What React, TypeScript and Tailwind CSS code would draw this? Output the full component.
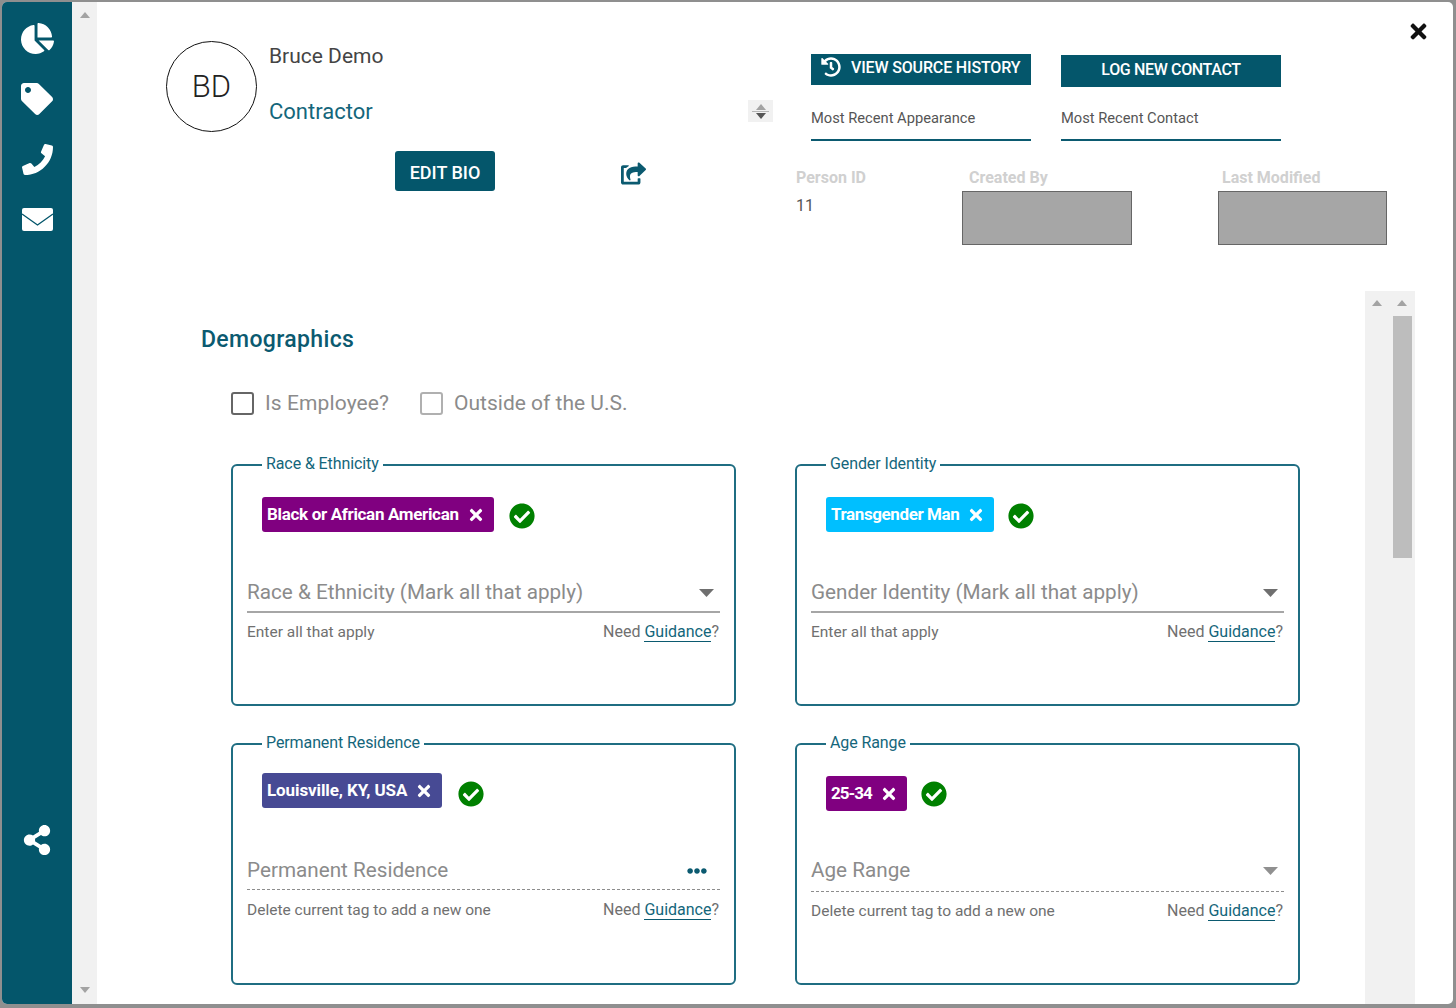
import React from "react";
import {
  FaChartPie,
  FaTag,
  FaPhone,
  FaShareAlt,
  FaHistory,
  FaShareSquare,
  FaTimes,
  FaCheckCircle,
  FaEllipsisH,
} from "react-icons/fa";

function Up({ className }: { className?: string }) {
  return (
    <svg width="10" height="6" viewBox="0 0 10 6" className={className}>
      <polygon points="5,0 10,6 0,6" fill="currentColor" />
    </svg>
  );
}
function Down({ className }: { className?: string }) {
  return (
    <svg width="10" height="6" viewBox="0 0 10 6" className={className}>
      <polygon points="0,0 10,0 5,6" fill="currentColor" />
    </svg>
  );
}

function Box({
  legend,
  chip,
  chipClass,
  chipTop,
  placeholder,
  help,
  inputClass,
  helpTop,
  ellipsis,
  faded,
  gap,
}: {
  legend: string;
  chip: string;
  chipClass: string;
  chipTop: string;
  placeholder: string;
  help: string;
  inputClass: string;
  helpTop: string;
  ellipsis?: boolean;
  faded?: boolean;
  gap: string;
}) {
  return (
    <fieldset className="h-[250px] min-w-0 rounded-md border-2 border-[#1f6d82] px-[14px]">
      <legend className="ml-[15px] px-1 pb-[2px] text-[16px] leading-[16px] tracking-[-0.1px] text-[#14667b]">{legend}</legend>
      <div className={`ml-[15px] flex items-center ${chipTop}`}>
        <span className={`flex h-[35px] items-center rounded-[3px] pl-[5px] pr-[9px] pt-[2px] text-[17px] font-bold text-white ${chipClass}`}>
          {chip}
          <FaTimes className="mb-[1px] ml-[8px] text-[18px]" />
        </span>
        <FaCheckCircle className={`${gap} text-[26px] text-[#008000]`} />
      </div>
      <div className={`flex items-center justify-between pr-[6px] text-[20.7px] text-[#8b8b8b] ${inputClass}`}>
        <span>{placeholder}</span>
        {ellipsis ? (
          <FaEllipsisH className="mr-[7px] text-[20px] text-[#0b5a70]" />
        ) : (
          <svg width="15" height="8" viewBox="0 0 15 8" className={faded ? "text-[#909090]" : "text-[#6f6f6f]"}>
            <polygon points="0,0 15,0 7.5,8" fill="currentColor" />
          </svg>
        )}
      </div>
      <div className={`flex items-center justify-between leading-[18px] text-[#707070] ${helpTop}`}>
        <span className="text-[15.5px]">{help}</span>
        <span className="pr-[1px] text-[16px]">
          Need{" "}
          <span className="border-b border-[#0b5a70] text-[#14667b]">Guidance</span>?
        </span>
      </div>
    </fieldset>
  );
}

export default function App() {
  return (
    <div className="h-[1008px] w-[1456px] overflow-hidden bg-[#8f8f8f] pb-[4px] pl-[2px] pr-[3px] pt-[2px] font-['Roboto',sans-serif]">
      <div className="relative flex h-full overflow-hidden rounded-[5px] bg-white">
        {/* side nav */}
        <nav className="flex w-[70px] shrink-0 flex-col items-center bg-[#04566b] pt-[20px] text-white">
          <FaChartPie className="text-[33px]" />
          <FaTag className="mt-[28px] text-[32px]" />
          <FaPhone className="mt-[29px] text-[31px]" />
          <svg width="31" height="23" viewBox="0 0 31 23" className="mt-[33px]">
            <rect width="31" height="23" rx="2" fill="#ffffff" />
            <path d="M0 6 L15.5 17 L31 6" fill="none" stroke="#04566b" strokeWidth="1.4" />
          </svg>
          <FaShareAlt className="mt-[594px] text-[30px]" />
        </nav>

        {/* page scrollbar */}
        <div className="flex w-[25px] shrink-0 flex-col items-center justify-between bg-[#f1f1f1] pb-[11px] pt-[10px] text-[#a3a3a3]">
          <Up />
          <Down />
        </div>

        <main className="min-w-0 flex-1">
          <FaTimes className="absolute right-[23px] top-[18px] text-[23px] text-[#111]" />

          {/* header */}
          <header className="flex h-[289px]">
            <div className="w-[676px] pl-[69px] pt-[39px]">
              <div className="flex">
                <div className="flex h-[91px] w-[91px] items-center justify-center rounded-full border-[1.5px] border-[#111] pt-[1px] text-[31px] font-light text-[#222]">
                  BD
                </div>
                <div className="ml-[12px]">
                  <div className="mt-[1px] text-[21px] leading-[28px] text-[#444]">Bruce Demo</div>
                  <div className="mt-[28px] text-[22px] leading-[28px] text-[#14667b]">Contractor</div>
                </div>
                <div className="ml-auto mt-[59px] flex h-[22px] w-[25px] flex-col items-center justify-center bg-[#f1f1f1]">
                  <Up className="text-[#a3a3a3]" />
                  <div className="my-[1px] h-px w-[17px] bg-[#b5b5b5]" />
                  <Down className="text-[#555]" />
                </div>
              </div>
              <div className="ml-[229px] mt-[19px] flex items-center">
                <button className="flex h-[40px] w-[100px] items-center justify-center rounded-[3px] bg-[#04566b] pt-[2px] text-[18px] font-medium text-white">
                  EDIT BIO
                </button>
                <FaShareSquare className="ml-[126px] mt-[5px] text-[25px] text-[#0b5a70]" />
              </div>
            </div>

            <div className="flex-1 pl-[38px] pt-[52px]">
              <div className="flex gap-[30px]">
                <div className="w-[220px]">
                  <button className="flex h-[31px] w-full items-start gap-[10px] bg-[#04566b] pl-[10px] pt-[3px] text-[16px] font-medium tracking-[-0.15px] text-white">
                    <FaHistory className="text-[20px]" />
                    <span className="mt-[1px] leading-[20px]">VIEW SOURCE HISTORY</span>
                  </button>
                  <div className="flex h-[56px] items-end border-b-2 border-[#0b5a70] pb-[12px] text-[14.7px] leading-[18px] text-[#555]">
                    Most Recent Appearance
                  </div>
                </div>
                <div className="w-[220px]">
                  <button className="mt-[1px] flex h-[32px] w-full items-center justify-center bg-[#04566b] pb-[2px] text-[16px] font-medium tracking-[-0.35px] text-white">
                    LOG NEW CONTACT
                  </button>
                  <div className="flex h-[54px] items-end border-b-2 border-[#0b5a70] pb-[12px] text-[14.7px] leading-[18px] text-[#555]">
                    Most Recent Contact
                  </div>
                </div>
              </div>
              <div className="ml-[-15px] mt-[28px] flex">
                <div className="w-[166px]">
                  <div className="text-[16px] font-bold leading-[18px] text-[#d0d0d0]">Person ID</div>
                  <div className="mt-[10px] text-[16px] leading-[18px] text-[#555]">11</div>
                </div>
                <div className="w-[170px]">
                  <div className="pl-[7px] text-[16px] font-bold leading-[18px] text-[#d0d0d0]">Created By</div>
                  <div className="mt-[4px] h-[54px] border border-[#666] bg-[#a6a6a6]" />
                </div>
                <div className="ml-[86px] w-[169px]">
                  <div className="pl-[4px] text-[16px] font-bold leading-[18px] text-[#d0d0d0]">Last Modified</div>
                  <div className="mt-[4px] h-[54px] border border-[#666] bg-[#a6a6a6]" />
                </div>
              </div>
            </div>
          </header>

          {/* body */}
          <section className="flex h-[713px]">
            <div className="w-[1268px] shrink-0 overflow-hidden pl-[134px] pt-[34px]">
              <h2 className="ml-[-30px] text-[23px] font-medium leading-[30px] tracking-[0.35px] text-[#0b5a70]">Demographics</h2>
              <div className="mt-[33px] flex items-center text-[21px] text-[#8b8b8b]">
                <span className="h-[23px] w-[23px] rounded-[3px] border-2 border-[#666]" />
                <span className="ml-[11px] tracking-[0.1px]">Is Employee?</span>
                <span className="ml-[31px] h-[23px] w-[23px] rounded-[3px] border-2 border-[#b0b0b0]" />
                <span className="ml-[11px]">Outside of the U.S.</span>
              </div>
              <div className="mt-[36px] grid w-[1069px] grid-cols-[505px_505px] gap-x-[59px] gap-y-[29px]">
                <Box
                  legend="Race & Ethnicity"
                  chip="Black or African American"
                  chipClass="bg-[#800080] tracking-[-0.33px]"
                  chipTop="mt-[23px]"
                  gap="ml-[15px] mt-[3px]"
                  placeholder="Race & Ethnicity (Mark all that apply)"
                  help="Enter all that apply"
                  inputClass="mt-[40px] h-[41px] border-b-2 border-[#a6a6a6] pt-[4px]"
                  helpTop="mt-[10px]"
                />
                <Box
                  legend="Gender Identity"
                  chip="Transgender Man"
                  chipClass="bg-[#00bfff] tracking-[-0.4px]"
                  chipTop="mt-[23px]"
                  gap="ml-[14px] mt-[3px]"
                  placeholder="Gender Identity (Mark all that apply)"
                  help="Enter all that apply"
                  inputClass="mt-[40px] h-[41px] border-b-2 border-[#a6a6a6] pt-[4px]"
                  helpTop="mt-[10px]"
                />
                <Box
                  legend="Permanent Residence"
                  chip="Louisville, KY, USA"
                  chipClass="bg-[#474a94] tracking-[-0.1px]"
                  chipTop="mt-[20px]"
                  gap="ml-[16px] mt-[7px]"
                  placeholder="Permanent Residence"
                  help="Delete current tag to add a new one"
                  inputClass="mt-[42px] h-[40px] border-b border-dashed border-[#8d8d8d] pt-[4px]"
                  helpTop="mt-[11px]"
                  ellipsis
                />
                <Box
                  legend="Age Range"
                  chip="25-34"
                  chipClass="bg-[#800080] tracking-[-1px]"
                  chipTop="mt-[23px]"
                  gap="ml-[14px] mt-[1px]"
                  placeholder="Age Range"
                  help="Delete current tag to add a new one"
                  inputClass="mt-[38px] h-[43px] border-b border-dashed border-[#8d8d8d] pt-[2px]"
                  helpTop="mt-[10px]"
                  faded
                />
              </div>
            </div>

            {/* inner scrollbars */}
            <div className="flex w-[50px] shrink-0 bg-[#f1f1f1] pt-[9px] text-[#a3a3a3]">
              <div className="flex w-[24px] justify-center">
                <Up />
              </div>
              <div className="flex w-[26px] flex-col items-center">
                <Up />
                <div className="mt-[10px] h-[242px] w-[19px] bg-[#bdbdbd]" />
              </div>
            </div>
          </section>
        </main>
      </div>
    </div>
  );
}
